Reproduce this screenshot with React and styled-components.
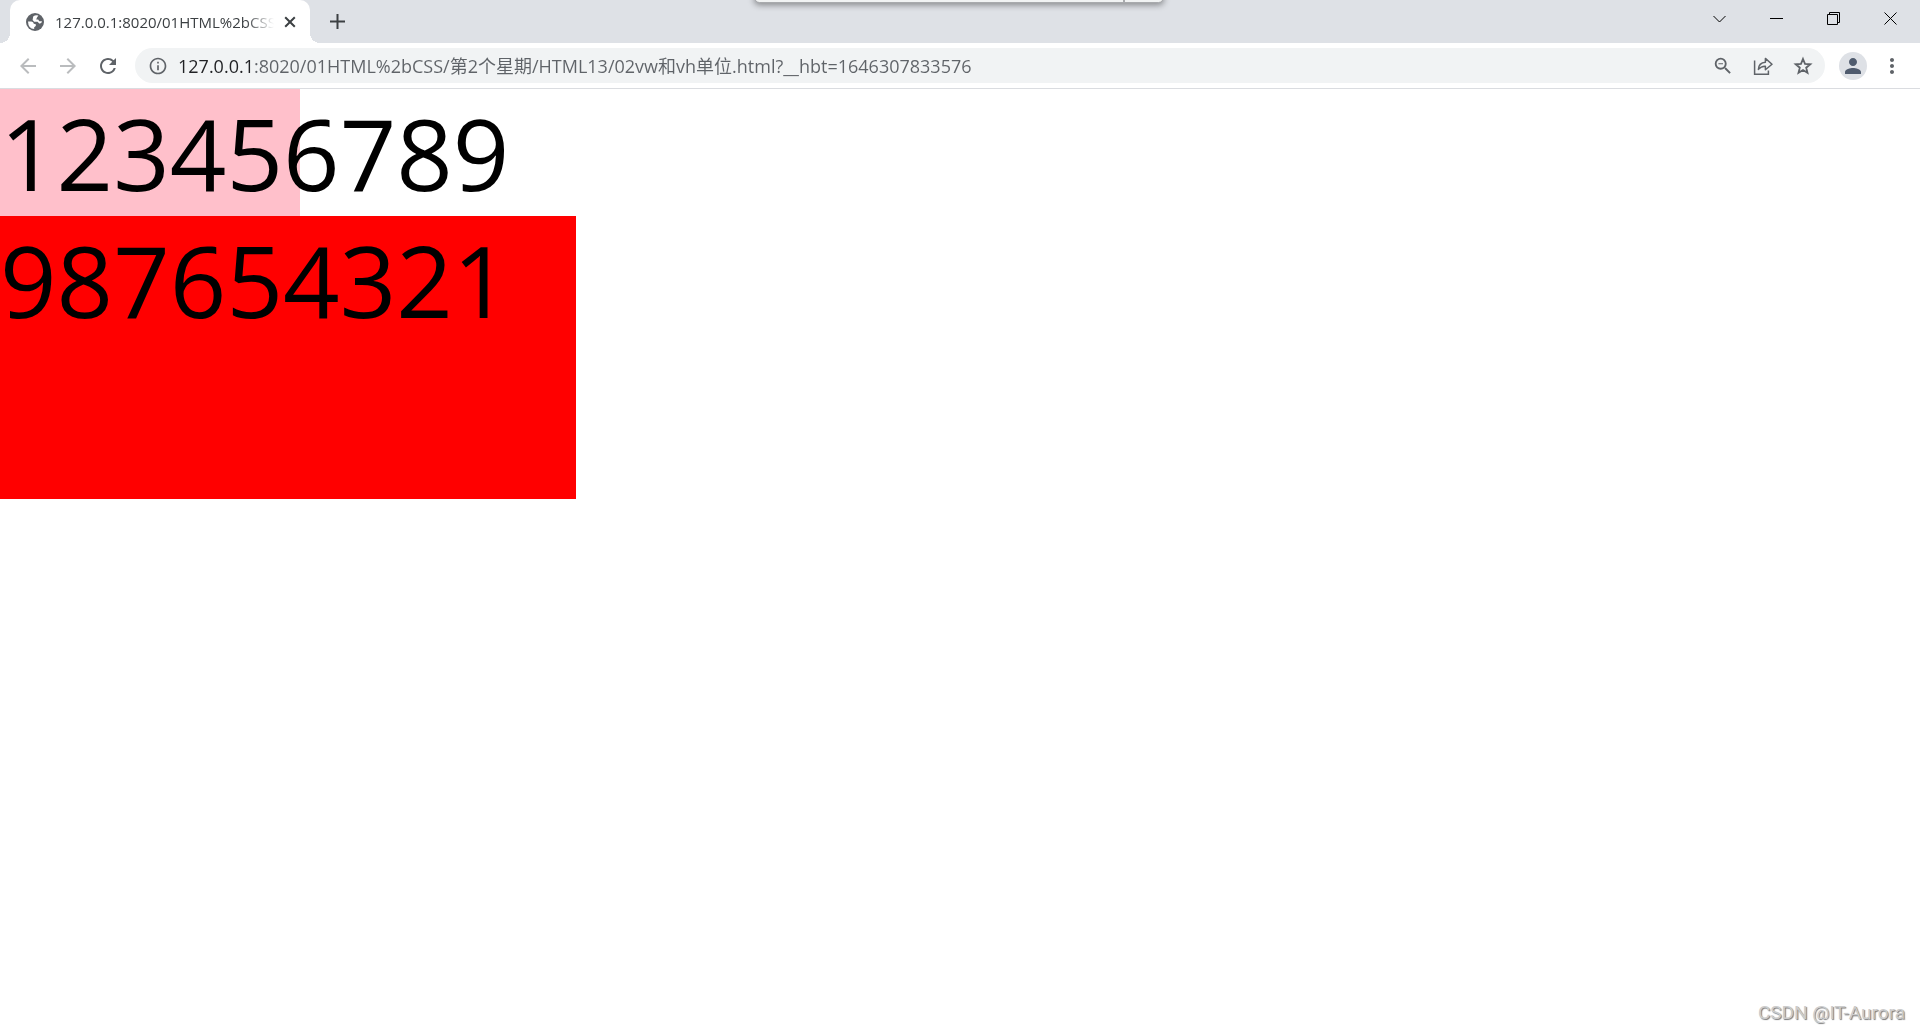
import React from "react";
import styled, { createGlobalStyle } from "styled-components";
import {
  MdArrowBack,
  MdArrowForward,
  MdRefresh,
  MdInfoOutline,
  MdPerson,
  MdMoreVert,
  MdOutlineZoomOut,
} from "react-icons/md";

const url =
  "127.0.0.1:8020/01HTML%2bCSS/第2个星期/HTML13/02vw和vh单位.html?__hbt=1646307833576";

const GlobeIcon = () => (
  <svg width="18" height="18" viewBox="0 0 18 18">
    <circle cx="9" cy="9" r="9" fill="#5f6368" />
    <path
      d="M2 8.4H5.4Q7.6 8.8 7.8 10.8L9.8 11.2V13L8.2 14.2V16.1Q2.2 15.6 2 8.4ZM7.2 3.6Q9.6 1.4 12.4 2.6L11 4.6 10.2 6.4H12.2L13.2 8.2H16Q15.6 10.8 13.2 10.4L11.6 8.8H8.2L6.6 7Z"
      fill="#fff"
    />
  </svg>
);

const CloseIcon = () => (
  <svg width="12" height="12" viewBox="0 0 12 12" stroke="#3c4043" strokeWidth="2">
    <path d="M1.2 1.2 10.8 10.8M10.8 1.2 1.2 10.8" />
  </svg>
);

const PlusIcon = () => (
  <svg width="15" height="15" viewBox="0 0 15 15" stroke="#3c4043" strokeWidth="2">
    <path d="M7.5 0V15M0 7.5H15" />
  </svg>
);

const StarIcon = () => (
  <svg width="20" height="20" viewBox="0 0 20 20" fill="none" stroke="#5f6368">
    <path
      d="M10 3 12 7.9 17.3 8.3 13.2 11.7 14.5 16.8 10 14 5.5 16.8 6.8 11.7 2.7 8.3 8 7.9Z"
      strokeWidth="1.8"
    />
  </svg>
);

const ShareIcon = () => (
  <svg width="20" height="20" viewBox="0 0 20 20" fill="none" stroke="#5f6368">
    <path d="M1.6 4.4V18.2H15.4V14.4" strokeWidth="1.5" />
    <path
      d="M5.4 13.4Q5.6 6.8 12.4 6.2V2.4L19 8.2 12.4 13.8V10.2Q8 10 5.4 13.4Z"
      strokeWidth="1.5"
      strokeLinejoin="round"
    />
  </svg>
);

const windowIcons = [
  { label: "Search tabs", d: "M0.5 4 6.5 10 12.5 4" },
  { label: "Minimize", d: "M0 6.5H13" },
  { label: "Restore", d: "M0.5 2.5H10.5V12.5H0.5ZM2.5 2.5V0.5H12.5V10.5H10.5" },
  { label: "Close", d: "M0.5 0.5 12.5 12.5M12.5 0.5 0.5 12.5" },
];

const App = () => {
  return (
    <>
      <GlobalStyle />
      <Browser>
        <TabStrip>
          <Tab>
            <GlobeIcon />
            <TabTitle>{url}</TabTitle>
            <TabButton aria-label="Close tab">
              <CloseIcon />
            </TabButton>
          </Tab>
          <NewTab aria-label="New tab">
            <PlusIcon />
          </NewTab>
          <WindowButtons>
            {windowIcons.map((icon) => (
              <WindowButton key={icon.label} aria-label={icon.label}>
                <svg width="13" height="13" viewBox="0 0 13 13" fill="none" stroke="#000">
                  <path d={icon.d} />
                </svg>
              </WindowButton>
            ))}
          </WindowButtons>
          <ShareBar />
        </TabStrip>
        <Toolbar>
          <IconButton aria-label="Back" $color="#babcbe">
            <MdArrowBack size={24} />
          </IconButton>
          <IconButton aria-label="Forward" $color="#babcbe">
            <MdArrowForward size={24} />
          </IconButton>
          <IconButton aria-label="Reload">
            <MdRefresh size={24} />
          </IconButton>
          <Omnibox>
            <MdInfoOutline size={20} />
            <Address aria-label="Address" defaultValue={url} spellCheck={false} />
            <IconButton aria-label="Zoom">
              <MdOutlineZoomOut size={22} />
            </IconButton>
            <IconButton aria-label="Share">
              <ShareIcon />
            </IconButton>
            <IconButton aria-label="Bookmark">
              <StarIcon />
            </IconButton>
          </Omnibox>
          <Avatar aria-label="Profile">
            <MdPerson size={24} />
          </Avatar>
          <IconButton aria-label="Menu">
            <MdMoreVert size={24} />
          </IconButton>
        </Toolbar>
        <Page>
          <PinkBox>123456789</PinkBox>
          <RedBox>987654321</RedBox>
          <Watermark>CSDN @IT-Aurora</Watermark>
        </Page>
      </Browser>
    </>
  );
};

const GlobalStyle = createGlobalStyle`
  * {
    box-sizing: border-box;
  }
  body {
    margin: 0;
    background-color: #fff;
    font-family: "Open Sans", "Noto Sans CJK SC", sans-serif;
  }
  button {
    display: flex;
    align-items: center;
    justify-content: center;
    flex-shrink: 0;
    padding: 0;
    border: none;
    background: none;
  }
  svg {
    display: block;
    flex-shrink: 0;
  }
`;
const Browser = styled.div`
  display: flex;
  flex-direction: column;
  min-height: 100vh;
`;
const TabStrip = styled.div`
  display: flex;
  position: relative;
  height: 43px;
  padding-left: 10px;
  background-color: #dee1e6;
  overflow: hidden;
`;
const Tab = styled.div`
  display: flex;
  align-items: center;
  position: relative;
  width: 300px;
  padding: 0 10px 0 16px;
  background-color: #fff;
  border-radius: 10px 10px 0 0;
  &::before,
  &::after {
    content: "";
    position: absolute;
    bottom: 0;
    width: 10px;
    height: 10px;
  }
  &::before {
    left: -10px;
    background: radial-gradient(circle at 0 0, #dee1e6 10px, #fff 10px);
  }
  &::after {
    right: -10px;
    background: radial-gradient(circle at 100% 0, #dee1e6 10px, #fff 10px);
  }
`;
const TabTitle = styled.span`
  flex: 1;
  margin: 0 6px 0 11px;
  overflow: hidden;
  white-space: nowrap;
  font-size: 15px;
  line-height: 20px;
  color: #3c4043;
  mask-image: linear-gradient(to right, #000 calc(100% - 28px), transparent);
`;
const TabButton = styled.button`
  width: 20px;
  height: 20px;
`;
const NewTab = styled.button`
  width: 35px;
  margin-left: 10px;
`;
const WindowButtons = styled.div`
  display: flex;
  margin-left: auto;
  height: 37px;
  padding-right: 1px;
`;
const WindowButton = styled.button`
  width: 57px;
`;
const ShareBar = styled.div`
  position: absolute;
  top: -8px;
  left: 50%;
  width: 410px;
  height: 11px;
  margin-left: -206px;
  border: 1px solid #a8aaad;
  border-radius: 8px;
  background: linear-gradient(#a8aaad, #a8aaad) 368px 0 / 2px 100% no-repeat, #f1f3f3;
  box-shadow: 0 2px 6px rgba(0, 0, 0, 0.4);
`;
const Toolbar = styled.div`
  display: flex;
  align-items: center;
  height: 46px;
  padding: 0 8px;
  border-bottom: 1px solid #dadce0;
  background-color: #fff;
`;
const IconButton = styled.button`
  width: 40px;
  height: 35px;
  color: ${({ $color }) => $color || "#5f6368"};
`;
const Omnibox = styled.div`
  display: flex;
  align-items: center;
  flex: 1;
  height: 35px;
  margin: 0 14px 0 7px;
  padding: 0 2px 0 13px;
  border-radius: 18px;
  background-color: #f1f3f4;
  color: #5f6368;
`;
const Address = styled.input`
  flex: 1;
  min-width: 0;
  height: 35px;
  margin-left: 10px;
  padding: 0 0 2px;
  border: none;
  outline: none;
  font-family: inherit;
  font-size: 18px;
  color: transparent;
  background: linear-gradient(to right, #202124 76px, #5f6368 76px);
  background-clip: text;
`;
const Avatar = styled.button`
  width: 28px;
  height: 28px;
  margin-right: 5px;
  border-radius: 50%;
  background-color: #dee1e6;
  color: #4f5b6e;
`;
const Page = styled.main`
  flex: 1;
  position: relative;
  font-size: 99px;
  line-height: 127px;
`;
const PinkBox = styled.div`
  width: 300px;
  background-color: pink;
`;
const RedBox = styled.div`
  width: 30vw;
  height: 283px;
  background-color: red;
`;
const Watermark = styled.span`
  position: absolute;
  right: 15px;
  bottom: 5px;
  font-family: Roboto, sans-serif;
  font-size: 19px;
  line-height: 24px;
  color: #ccc;
  text-shadow: 1px 1px 1px #777;
`;
export default App;
